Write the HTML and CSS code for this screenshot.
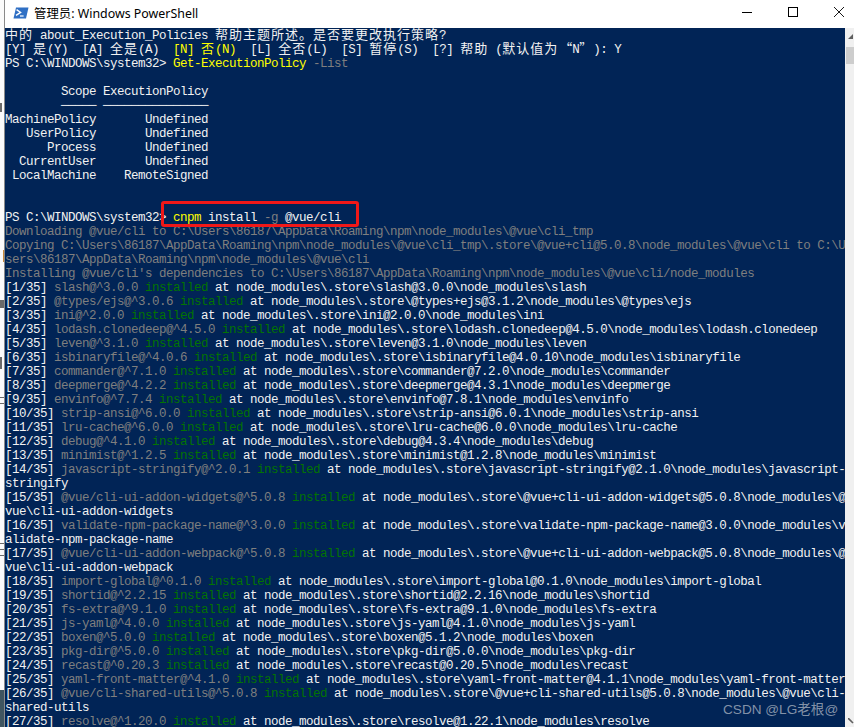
FILE: index.html
```html
<!DOCTYPE html>
<html lang="zh-CN">
<head>
<meta charset="utf-8">
<title>管理员: Windows PowerShell</title>
<link rel="stylesheet" href="styles.css">
</head>
<body>
<div class="screen">
  <div class="backdrop"></div>
  <div class="window">
    <header class="titlebar">
      <svg class="app-icon" width="16" height="12" viewBox="0 0 16 12" aria-hidden="true">
        <path d="M3 0.5H15.5L13 11.5H0.5Z" fill="#2f6fc4"/>
        <path d="M3.6 2.6L7.6 5.4L3 8.4" fill="none" stroke="#fff" stroke-width="1.4"/>
        <path d="M7 9H10.6" fill="none" stroke="#fff" stroke-width="1.2"/>
      </svg>
      <span class="title">管理员: Windows PowerShell</span>
      <div class="controls">
        <svg class="ctl" width="10" height="10" viewBox="0 0 10 10" aria-hidden="true"><path d="M0 5.5H10" stroke="#000" fill="none"/></svg>
        <svg class="ctl" width="10" height="10" viewBox="0 0 10 10" aria-hidden="true"><rect x="0.5" y="0.5" width="9" height="9" stroke="#000" fill="none"/></svg>
        <svg class="ctl" width="10" height="10" viewBox="0 0 10 10" aria-hidden="true"><path d="M0 0L10 10M10 0L0 10" stroke="#000" stroke-width="0.9" fill="none"/></svg>
      </div>
    </header>
    <div class="console">
      <main class="terminal">
<div class="l"><span class="c">中的</span> about_Execution_Policies <span class="c">帮助主题所述。是否要更改执行策略</span>?</div>
<div class="l">[Y] <span class="c">是</span>(Y)  [A] <span class="c">全是</span>(A)  <span class="y">[N] <span class="c">否</span>(N)</span>  [L] <span class="c">全否</span>(L)  [S] <span class="c">暂停</span>(S)  [?] <span class="c">帮助</span> (<span class="c">默认值为</span><span class="c q-open">“</span>N<span class="c q-close">”</span>): Y</div>
<div class="l">PS C:\WINDOWS\system32&gt; <span class="y">Get-ExecutionPolicy</span> <span class="g">-List</span></div>
<div class="l"></div>
<div class="l">        Scope ExecutionPolicy</div>
<div class="l">        ───── ───────────────</div>
<div class="l">MachinePolicy       Undefined</div>
<div class="l">   UserPolicy       Undefined</div>
<div class="l">      Process       Undefined</div>
<div class="l">  CurrentUser       Undefined</div>
<div class="l"> LocalMachine    RemoteSigned</div>
<div class="l"></div>
<div class="l"></div>
<div class="l">PS C:\WINDOWS\system32&gt; <span class="y">cnpm</span> install <span class="g">-g</span> @vue/cli</div>
<div class="l g">Downloading @vue/cli to C:\Users\86187\AppData\Roaming\npm\node_modules\@vue\cli_tmp</div>
<div class="l g">Copying C:\Users\86187\AppData\Roaming\npm\node_modules\@vue\cli_tmp\.store\@vue+cli@5.0.8\node_modules\@vue\cli to C:\U</div>
<div class="l g">sers\86187\AppData\Roaming\npm\node_modules\@vue\cli</div>
<div class="l g">Installing @vue/cli's dependencies to C:\Users\86187\AppData\Roaming\npm\node_modules\@vue\cli/node_modules</div>
<div class="l">[1/35] <span class="g">slash@^3.0.0</span> <span class="i">installed</span> at node_modules\.store\slash@3.0.0\node_modules\slash</div>
<div class="l">[2/35] <span class="g">@types/ejs@^3.0.6</span> <span class="i">installed</span> at node_modules\.store\@types+ejs@3.1.2\node_modules\@types\ejs</div>
<div class="l">[3/35] <span class="g">ini@^2.0.0</span> <span class="i">installed</span> at node_modules\.store\ini@2.0.0\node_modules\ini</div>
<div class="l">[4/35] <span class="g">lodash.clonedeep@^4.5.0</span> <span class="i">installed</span> at node_modules\.store\lodash.clonedeep@4.5.0\node_modules\lodash.clonedeep</div>
<div class="l">[5/35] <span class="g">leven@^3.1.0</span> <span class="i">installed</span> at node_modules\.store\leven@3.1.0\node_modules\leven</div>
<div class="l">[6/35] <span class="g">isbinaryfile@^4.0.6</span> <span class="i">installed</span> at node_modules\.store\isbinaryfile@4.0.10\node_modules\isbinaryfile</div>
<div class="l">[7/35] <span class="g">commander@^7.1.0</span> <span class="i">installed</span> at node_modules\.store\commander@7.2.0\node_modules\commander</div>
<div class="l">[8/35] <span class="g">deepmerge@^4.2.2</span> <span class="i">installed</span> at node_modules\.store\deepmerge@4.3.1\node_modules\deepmerge</div>
<div class="l">[9/35] <span class="g">envinfo@^7.7.4</span> <span class="i">installed</span> at node_modules\.store\envinfo@7.8.1\node_modules\envinfo</div>
<div class="l">[10/35] <span class="g">strip-ansi@^6.0.0</span> <span class="i">installed</span> at node_modules\.store\strip-ansi@6.0.1\node_modules\strip-ansi</div>
<div class="l">[11/35] <span class="g">lru-cache@^6.0.0</span> <span class="i">installed</span> at node_modules\.store\lru-cache@6.0.0\node_modules\lru-cache</div>
<div class="l">[12/35] <span class="g">debug@^4.1.0</span> <span class="i">installed</span> at node_modules\.store\debug@4.3.4\node_modules\debug</div>
<div class="l">[13/35] <span class="g">minimist@^1.2.5</span> <span class="i">installed</span> at node_modules\.store\minimist@1.2.8\node_modules\minimist</div>
<div class="l">[14/35] <span class="g">javascript-stringify@^2.0.1</span> <span class="i">installed</span> at node_modules\.store\javascript-stringify@2.1.0\node_modules\javascript-</div>
<div class="l">stringify</div>
<div class="l">[15/35] <span class="g">@vue/cli-ui-addon-widgets@^5.0.8</span> <span class="i">installed</span> at node_modules\.store\@vue+cli-ui-addon-widgets@5.0.8\node_modules\@</div>
<div class="l">vue\cli-ui-addon-widgets</div>
<div class="l">[16/35] <span class="g">validate-npm-package-name@^3.0.0</span> <span class="i">installed</span> at node_modules\.store\validate-npm-package-name@3.0.0\node_modules\v</div>
<div class="l">alidate-npm-package-name</div>
<div class="l">[17/35] <span class="g">@vue/cli-ui-addon-webpack@^5.0.8</span> <span class="i">installed</span> at node_modules\.store\@vue+cli-ui-addon-webpack@5.0.8\node_modules\@</div>
<div class="l">vue\cli-ui-addon-webpack</div>
<div class="l">[18/35] <span class="g">import-global@^0.1.0</span> <span class="i">installed</span> at node_modules\.store\import-global@0.1.0\node_modules\import-global</div>
<div class="l">[19/35] <span class="g">shortid@^2.2.15</span> <span class="i">installed</span> at node_modules\.store\shortid@2.2.16\node_modules\shortid</div>
<div class="l">[20/35] <span class="g">fs-extra@^9.1.0</span> <span class="i">installed</span> at node_modules\.store\fs-extra@9.1.0\node_modules\fs-extra</div>
<div class="l">[21/35] <span class="g">js-yaml@^4.0.0</span> <span class="i">installed</span> at node_modules\.store\js-yaml@4.1.0\node_modules\js-yaml</div>
<div class="l">[22/35] <span class="g">boxen@^5.0.0</span> <span class="i">installed</span> at node_modules\.store\boxen@5.1.2\node_modules\boxen</div>
<div class="l">[23/35] <span class="g">pkg-dir@^5.0.0</span> <span class="i">installed</span> at node_modules\.store\pkg-dir@5.0.0\node_modules\pkg-dir</div>
<div class="l">[24/35] <span class="g">recast@^0.20.3</span> <span class="i">installed</span> at node_modules\.store\recast@0.20.5\node_modules\recast</div>
<div class="l">[25/35] <span class="g">yaml-front-matter@^4.1.0</span> <span class="i">installed</span> at node_modules\.store\yaml-front-matter@4.1.1\node_modules\yaml-front-matter</div>
<div class="l">[26/35] <span class="g">@vue/cli-shared-utils@^5.0.8</span> <span class="i">installed</span> at node_modules\.store\@vue+cli-shared-utils@5.0.8\node_modules\@vue\cli-</div>
<div class="l">shared-utils</div>
<div class="l">[27/35] <span class="g">resolve@^1.20.0</span> <span class="i">installed</span> at node_modules\.store\resolve@1.22.1\node_modules\resolve</div>
      </main>
      <aside class="scrollbar">
        <svg class="arrow-up" width="6" height="6" viewBox="0 0 6 6" aria-hidden="true"><path d="M0 5L5 0V5Z" fill="#606060"/></svg>
        <div class="thumb"></div>
        <svg class="arrow-down" width="6" height="6" viewBox="0 0 6 6" aria-hidden="true"><path d="M0 0L5 5" stroke="#606060" stroke-width="1.6" fill="none"/></svg>
      </aside>
    </div>
  </div>
  <div class="highlight"></div>
  <div class="watermark">CSDN @LG老根@</div>
</div>
</body>
</html>
```
FILE: styles.css
```css
html, body {
  margin: 0;
  padding: 0;
  background: #fff;
}
.screen {
  position: relative;
  display: flex;
  width: 854px;
  height: 727px;
  overflow: hidden;
}
.backdrop {
  flex: 0 0 4px;
  background:
    linear-gradient(#6a6a6a, #6a6a6a) 0 543px / 4px 1px no-repeat,
    linear-gradient(#6a6a6a, #6a6a6a) 0 549px / 4px 1px no-repeat,
    linear-gradient(#6a6a6a, #6a6a6a) 0 555px / 4px 1px no-repeat,
    linear-gradient(#6a6a6a, #6a6a6a) 0 397px / 4px 1px no-repeat,
    linear-gradient(#6a6a6a, #6a6a6a) 0 403px / 4px 1px no-repeat,
    linear-gradient(#6a6a6a, #6a6a6a) 0 357px / 2px 12px no-repeat,
    linear-gradient(#6a6a6a, #6a6a6a) 0 300px / 4px 8px no-repeat,
    linear-gradient(#c98a3c, #c98a3c) 3px 250px / 1px 12px no-repeat,
    linear-gradient(#6a6a6a, #6a6a6a) 0 103px / 2px 9px no-repeat,
    linear-gradient(#3f5560, #3f5560) 0 690px / 4px 37px no-repeat,
    #fbfbfb;
}
.window {
  flex: 1;
  min-width: 0;
  display: flex;
  flex-direction: column;
  border-left: 1px solid #8a8a8a;
}
.titlebar {
  flex: 0 0 28px;
  display: flex;
  align-items: center;
  background: #fff;
  padding-left: 8px;
}
.app-icon {
  flex: none;
  margin-right: 5px;
  margin-top: -3px;
}
.title {
  font-family: "Noto Sans", "Noto Sans CJK SC", sans-serif;
  font-size: 12.4px;
  color: #000;
  white-space: pre;
  margin-top: -2px;
}
.controls {
  margin-left: auto;
  display: flex;
  gap: 36px;
  padding-right: 10px;
  margin-top: -4px;
}
.ctl {
  display: block;
}
.console {
  flex: 1;
  min-height: 0;
  display: flex;
}
.terminal {
  flex: 1;
  min-width: 0;
  background: #012456;
  color: #f2f2f2;
  font-family: "Liberation Mono", "Noto Sans CJK SC", monospace;
  font-size: 12.5px;
  letter-spacing: -0.5px;
  line-height: 14px;
  padding-top: 1px;
  overflow: hidden;
}
.l {
  height: 14px;
  white-space: pre;
}
.c {
  font-family: "Noto Sans CJK SC", sans-serif;
  font-size: 13px;
  letter-spacing: 1px;
  line-height: 0;
}
.q-open,
.q-close {
  display: inline-block;
  width: 14px;
  letter-spacing: 0;
}
.q-open {
  text-align: right;
}
.q-close {
  text-align: left;
}
.g {
  color: #7f7f7f;
}
.i {
  color: #037303;
}
.y {
  color: #ffff00;
}
.scrollbar {
  flex: 0 0 9px;
  position: relative;
  background: #f0f0f0;
}
.thumb {
  position: absolute;
  top: 19px;
  left: 1px;
  right: 0;
  height: 17px;
  background: #cdcdcd;
}
.arrow-up {
  position: absolute;
  top: 6px;
  left: 3px;
}
.arrow-down {
  position: absolute;
  bottom: 3px;
  left: 3px;
}
.highlight {
  position: absolute;
  left: 161px;
  top: 201px;
  width: 192px;
  height: 20px;
  border: 3px solid #f01818;
  border-radius: 3px;
}
.watermark {
  position: absolute;
  left: 723px;
  top: 702px;
  font-family: "Liberation Sans", "Noto Sans CJK SC", sans-serif;
  font-size: 13.6px;
  line-height: 16px;
  color: rgba(190, 195, 205, 0.7);
  white-space: pre;
}
```
